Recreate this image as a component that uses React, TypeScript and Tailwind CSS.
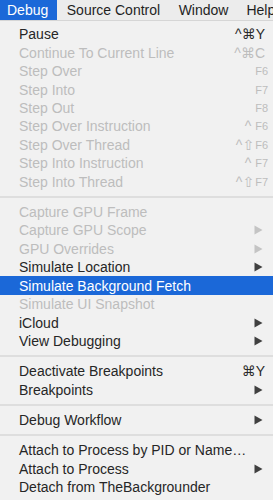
import { ReactNode } from "react";

type Row = {
  label: string;
  mods?: string;
  fkey?: string;
  sub?: boolean;
  off?: boolean;
  active?: boolean;
};

type Entry = Row | "sep";

const entries: Entry[] = [
  { label: "Pause", mods: "^⌘Y" },
  { label: "Continue To Current Line", mods: "^⌘C", off: true },
  { label: "Step Over", fkey: "F6", off: true },
  { label: "Step Into", fkey: "F7", off: true },
  { label: "Step Out", fkey: "F8", off: true },
  { label: "Step Over Instruction", mods: "^", fkey: "F6", off: true },
  { label: "Step Over Thread", mods: "^⇧", fkey: "F6", off: true },
  { label: "Step Into Instruction", mods: "^", fkey: "F7", off: true },
  { label: "Step Into Thread", mods: "^⇧", fkey: "F7", off: true },
  "sep",
  { label: "Capture GPU Frame", off: true },
  { label: "Capture GPU Scope", sub: true, off: true },
  { label: "GPU Overrides", sub: true, off: true },
  { label: "Simulate Location", sub: true },
  { label: "Simulate Background Fetch", active: true },
  { label: "Simulate UI Snapshot", off: true },
  { label: "iCloud", sub: true },
  { label: "View Debugging", sub: true },
  "sep",
  { label: "Deactivate Breakpoints", mods: "⌘Y" },
  { label: "Breakpoints", sub: true },
  "sep",
  { label: "Debug Workflow", sub: true },
  "sep",
  { label: "Attach to Process by PID or Name…" },
  { label: "Attach to Process", sub: true },
  { label: "Detach from TheBackgrounder" },
];

const Arrow = ({ color }: { color: string }) => (
  <svg width="9" height="10" viewBox="0 0 9 10" className="mr-[10px]">
    <path d="M0.5 0.5 L8.5 5 L0.5 9.5 Z" fill={color} />
  </svg>
);

function Shortcut({ row }: { row: Row }) {
  const tone = row.off ? "text-[#bdbdbd]" : "text-[#2a2a2a]";
  let mods: ReactNode = null;
  if (row.mods) {
    mods = (
      <span className={row.fkey ? "mr-[1px]" : ""}>
        {row.mods === "^" ? "^\u2009" : row.mods}
      </span>
    );
  }
  return (
    <div className={`flex items-center pr-[8px] ${tone}`}>
      {mods}
      {row.fkey && <span className="text-[11px] -mr-[3px] pt-[1px]">{row.fkey}</span>}
    </div>
  );
}

function MenuRow({ row }: { row: Row }) {
  const base = row.active
    ? "bg-[#1b68d8] text-white"
    : row.off
    ? "text-[#bdbdbd]"
    : "text-[#262626]";
  return (
    <div className={`flex h-[18.45px] items-center justify-between pl-[19px] ${base}`}>
      <span className="whitespace-nowrap">{row.label}</span>
      {row.sub ? <Arrow color={row.off ? "#c4c4c4" : "#404040"} /> : (row.mods || row.fkey) && <Shortcut row={row} />}
    </div>
  );
}

export default function App() {
  return (
    <div
      className="h-[500px] w-[273px] overflow-hidden bg-[#f1f1f1] text-[14px] leading-none"
      style={{ fontFamily: '"Liberation Sans", "DejaVu Sans", sans-serif' }}
    >
      <div className="flex h-[21px] items-center border-b border-[#d6d6d6] bg-[#ececec] text-[#1f1f1f] whitespace-nowrap">
        <div className="flex h-full items-center bg-[#1b68d8] pl-[7px] pr-[9px] text-white">Debug</div>
        <div className="px-[9.5px]">Source Control</div>
        <div className="px-[9px]">Window</div>
        <div className="px-[9px]">Help</div>
      </div>
      <div className="pt-[4px]">
        {entries.map((e, i) =>
          e === "sep" ? (
            <div key={i} className="flex h-[11.8px] items-center">
              <div className="h-[2px] w-full bg-[#dedede]" />
            </div>
          ) : (
            <MenuRow key={i} row={e} />
          )
        )}
      </div>
    </div>
  );
}
